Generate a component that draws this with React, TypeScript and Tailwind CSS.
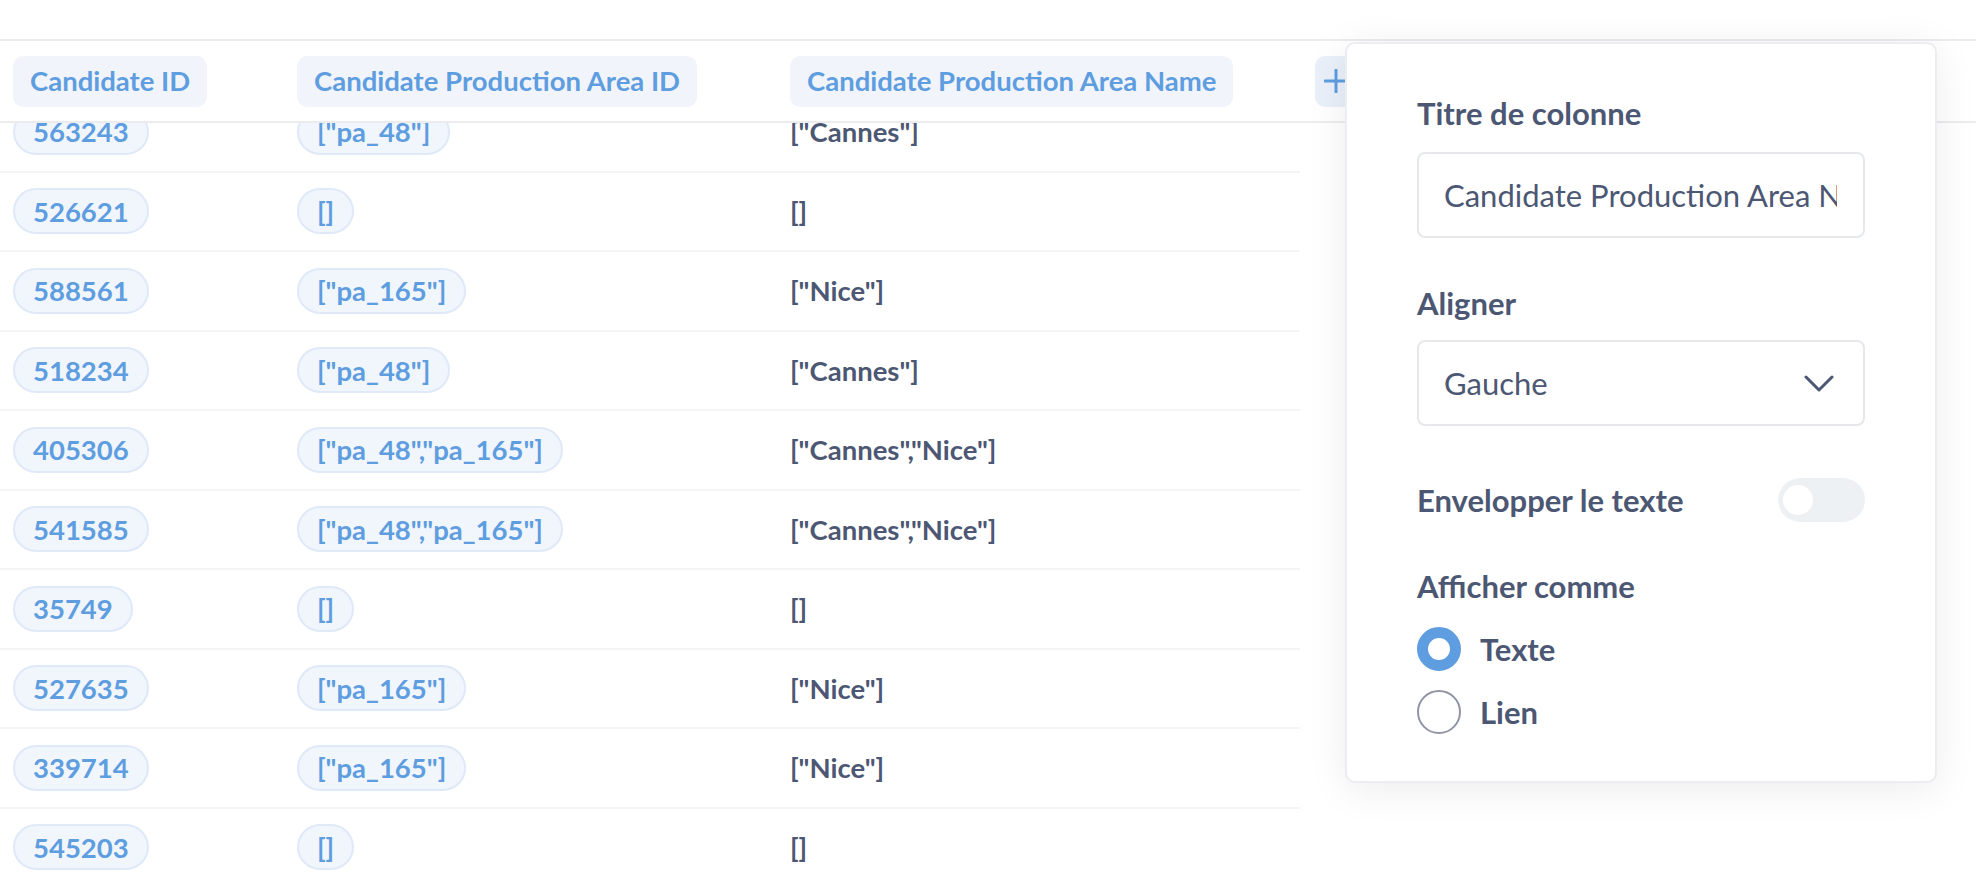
import React from 'react';

type Row = { id: string; areaIds: string; areaNames: string };

const ROWS: Row[] = [
  { id: '563243', areaIds: '["pa_48"]', areaNames: '["Cannes"]' },
  { id: '526621', areaIds: '[]', areaNames: '[]' },
  { id: '588561', areaIds: '["pa_165"]', areaNames: '["Nice"]' },
  { id: '518234', areaIds: '["pa_48"]', areaNames: '["Cannes"]' },
  { id: '405306', areaIds: '["pa_48","pa_165"]', areaNames: '["Cannes","Nice"]' },
  { id: '541585', areaIds: '["pa_48","pa_165"]', areaNames: '["Cannes","Nice"]' },
  { id: '35749', areaIds: '[]', areaNames: '[]' },
  { id: '527635', areaIds: '["pa_165"]', areaNames: '["Nice"]' },
  { id: '339714', areaIds: '["pa_165"]', areaNames: '["Nice"]' },
  { id: '545203', areaIds: '[]', areaNames: '[]' },
];

const HeaderPill = ({ label }: { label: string }) => (
  <div className="h-[51px] px-[17px] flex items-center rounded-[10px] bg-[#f1f5fb] text-[#5e9de0] text-[27.5px] font-bold whitespace-nowrap">
    {label}
  </div>
);

const CellPill = ({ value }: { value: string }) => (
  <div className="h-[46px] px-[18px] flex items-center rounded-full border-2 border-[#dfe9f8] bg-[#f1f6fd] text-[#5e9de0] text-[27.5px] font-bold whitespace-nowrap">
    {value}
  </div>
);

const Label = ({ children }: { children: React.ReactNode }) => (
  <div className="text-[31px] leading-[36px] font-bold text-[#4c5773] whitespace-nowrap">{children}</div>
);

export default function App() {
  return (
    <div className="relative w-[1976px] h-[876px] overflow-hidden bg-white font-['Lato','Noto_Sans',sans-serif]">
      {/* top bar */}
      <div className="h-[41px] border-b-2 border-[#ececef]" />

      {/* table header */}
      <div className="h-[82px] flex items-center border-b-2 border-[#ececef]">
        <div className="w-[297px] pl-[13px] flex">
          <HeaderPill label="Candidate ID" />
        </div>
        <div className="w-[493px] flex">
          <HeaderPill label="Candidate Production Area ID" />
        </div>
        <div className="w-[525px] flex">
          <HeaderPill label="Candidate Production Area Name" />
        </div>
        <div className="h-[51px] w-[42px] flex items-center justify-center rounded-[10px] bg-[#e9f0fa]">
          <svg width="24" height="24" viewBox="0 0 24 24" fill="none">
            <path d="M12 1v22M1 12h22" stroke="#5e9de0" strokeWidth="3" strokeLinecap="round" />
          </svg>
        </div>
      </div>

      {/* table body, scrolled */}
      <div className="overflow-hidden">
        <div className="-mt-[30px] w-[1300px]">
          {ROWS.map((row) => (
            <div key={row.id} className="h-[79.5px] flex items-center border-b-2 border-[#f4f4f6]">
              <div className="w-[297px] pl-[13px] flex">
                <CellPill value={row.id} />
              </div>
              <div className="w-[493px] flex">
                <CellPill value={row.areaIds} />
              </div>
              <div className="text-[27.5px] font-bold text-[#4c5773] whitespace-nowrap">{row.areaNames}</div>
            </div>
          ))}
        </div>
      </div>

      {/* column settings popover */}
      <div className="absolute left-[1345px] top-[42px] w-[592px] h-[741px] rounded-[10px] border-2 border-[#ebedf0] bg-white shadow-[0_6px_40px_rgba(0,0,0,0.08)] px-[70px] pt-[51px]">
        <Label>Titre de colonne</Label>
        <div className="mt-[21px] h-[86px] rounded-[8px] border-2 border-[#e6e8ec] flex items-center pl-[25px] pr-[26px]">
          <div className="overflow-hidden whitespace-nowrap text-[31px] text-[#4c5773]">
            Candidate Production Area Name
          </div>
        </div>

        <div className="mt-[47px]">
          <Label>Aligner</Label>
        </div>
        <div className="mt-[19px] h-[86px] rounded-[8px] border-2 border-[#e6e8ec] flex items-center justify-between pl-[25px] pr-[29px]">
          <span className="text-[31px] text-[#4c5773]">Gauche</span>
          <svg width="30" height="17" viewBox="0 0 30 17" fill="none">
            <polyline points="2,2 15,15 28,2" stroke="#4c5773" strokeWidth="3" strokeLinecap="round" strokeLinejoin="round" />
          </svg>
        </div>

        <div className="mt-[52px] h-[44px] flex items-center justify-between">
          <Label>Envelopper le texte</Label>
          <div className="relative w-[87px] h-[44px] rounded-full bg-[#eef1f4]">
            <div className="absolute left-[5px] top-[7px] w-[30px] h-[30px] rounded-full bg-white" />
          </div>
        </div>

        <div className="mt-[46px]">
          <Label>Afficher comme</Label>
        </div>
        <div className="mt-[22px] flex items-center gap-[19px]">
          <div className="w-[44px] h-[44px] rounded-full border-[11px] border-[#5e9de0] bg-white" />
          <span className="text-[31px] font-bold text-[#4c5773]">Texte</span>
        </div>
        <div className="mt-[16px] flex items-center gap-[19px]">
          <div className="w-[44px] h-[44px] rounded-full border-2 border-[#8f95a6] bg-white" />
          <span className="text-[31px] font-bold text-[#4c5773]">Lien</span>
        </div>
      </div>
    </div>
  );
}
